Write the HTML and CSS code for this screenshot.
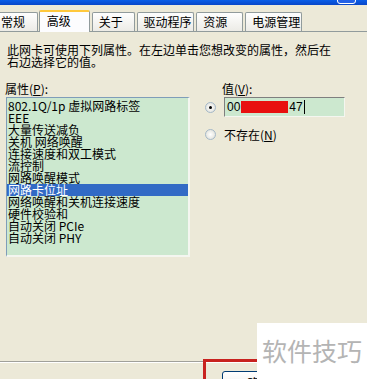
FILE: index.html
```html
<!DOCTYPE html>
<html lang="zh-CN">
<head>
    <meta charset="UTF-8">
    <title>网卡属性 - 高级</title>
    <link rel="stylesheet" href="styles.css">
</head>
<body>
    <div class="window">
        <div class="titlebar"><span class="tb-btn"></span></div>

        <div class="tabs">
            <div class="tab first">常规</div>
            <div class="tab active">高级</div>
            <div class="tab w-about">关于</div>
            <div class="tab w-driver">驱动程序</div>
            <div class="tab w-res">资源</div>
            <div class="tab w-power">电源管理</div>
        </div>

        <div class="page">
            <p class="desc">此网卡可使用下列属性。在左边单击您想改变的属性，然后在<br>右边选择它的值。</p>

            <div class="props">
                <div class="col-left">
                    <div class="label">属性(<u>P</u>):</div>
                    <ul class="listbox">
                        <li>802.1Q/1p 虚拟网路标签</li>
                        <li>EEE</li>
                        <li>大量传送减负</li>
                        <li>关机 网络唤醒</li>
                        <li>连接速度和双工模式</li>
                        <li>流控制</li>
                        <li>网路唤醒模式</li>
                        <li class="selected">网路卡位址</li>
                        <li>网络唤醒和关机连接速度</li>
                        <li>硬件校验和</li>
                        <li>自动关闭 PCIe</li>
                        <li>自动关闭 PHY</li>
                    </ul>
                </div>

                <div class="col-right">
                    <div class="label value-label">值(<u>V</u>):</div>
                    <div class="radio-row">
                        <span class="radio checked"></span>
                        <div class="textbox">00<span class="redact"></span>47<span class="caret"></span></div>
                    </div>
                    <div class="radio-row second">
                        <span class="radio"></span>
                        <span class="radio-text">不存在(<u>N</u>)</span>
                    </div>
                </div>
            </div>

            <div class="footer">
                <button class="btn">确定</button>
            </div>
        </div>

        <div class="mark-box"></div>
        <div class="watermark">软件技巧</div>
    </div>
</body>
</html>
```

FILE: styles.css
```css
* {
    box-sizing: border-box;
    margin: 0;
    padding: 0;
}

body {
    background: #ece9d8;
    font-family: "Noto Sans CJK SC", "DejaVu Sans", sans-serif;
    font-size: 12px;
    color: #000;
}

.window {
    position: relative;
    width: 367px;
    height: 379px;
    overflow: hidden;
    display: flex;
    flex-direction: column;
}

/* title bar strip */
.titlebar {
    height: 5px;
    background: linear-gradient(#0a5ee8, #0846c8);
    position: relative;
}

.tb-btn {
    position: absolute;
    left: 337px;
    top: -6px;
    width: 19px;
    height: 10px;
    border: 1px solid #fff;
    border-radius: 3px;
    background: #2462e6;
}

/* tabs */
.tabs {
    display: flex;
    align-items: flex-end;
    height: 27px;
    border-bottom: 1px solid #919b9c;
    padding-right: 65px;
}

.tab {
    height: 19px;
    line-height: 17px;
    border: 1px solid #919b9c;
    border-bottom: none;
    border-radius: 2px 2px 0 0;
    background: linear-gradient(#fefefe, #ecebe6);
    margin-right: 2px;
    padding-left: 6px;
    font-size: 12px;
}

.tab.first {
    margin-left: -10px;
    width: 48px;
    padding-left: 10px;
}

.tab.active {
    height: 22px;
    line-height: 18px;
    width: 51px;
    margin-left: -1px;
    margin-bottom: -1px;
    padding-left: 7px;
    background: #fcfcfe;
    border-top: 2px solid #ffc83c;
}

.w-about { width: 43px; }
.w-driver { width: 58px; }
.w-res { width: 47px; }
.w-power { width: 57px; margin-right: 0; }

/* page body */
.page {
    flex: 1;
    display: flex;
    flex-direction: column;
    padding-left: 6px;
}

.desc {
    margin-top: 12px;
    line-height: 12px;
    padding-left: 1px;
}

.props {
    display: flex;
    margin-top: 14px;
}

.label {
    height: 14px;
    line-height: 14px;
    margin-left: -1px;
}

.col-left {
    width: 184px;
}

.listbox {
    list-style: none;
    margin-top: 1px;
    height: 160px;
    background: #cce8cf;
    border-top: 1px solid #7f9db9;
    border-left: 1px solid #7f9db9;
    border-right: 2px solid #f4f6f0;
    border-bottom: 2px solid #f4f6f0;
    padding-top: 2px;
}

.listbox li {
    height: 12px;
    line-height: 12px;
    padding-left: 1px;
    white-space: nowrap;
}

.listbox li.selected {
    background: #316ac5;
    color: #fff;
}

.col-right {
    margin-left: 15px;
    width: 140px;
}

.value-label {
    margin-left: 17px;
}

.radio-row {
    display: flex;
    align-items: center;
    margin-top: 1px;
}

.radio-row.second {
    margin-top: 9px;
}

.radio {
    width: 11px;
    height: 11px;
    border-radius: 50%;
    border: 1px solid #a4b8c8;
    background: radial-gradient(#ffffff, #dcdcd4);
    position: relative;
    flex: none;
}

.radio.checked::after {
    content: "";
    position: absolute;
    left: 3px;
    top: 3px;
    width: 3px;
    height: 3px;
    border-radius: 50%;
    background: #000;
}

.textbox {
    margin-left: 8px;
    width: 121px;
    height: 20px;
    line-height: 17px;
    background: #cce8cf;
    border-top: 1px solid #7f7f7f;
    border-left: 1px solid #7f7f7f;
    border-right: 1px solid #f4f6f0;
    border-bottom: 1px solid #f4f6f0;
    padding-left: 2px;
    display: flex;
    align-items: center;
    font-family: "Liberation Sans", sans-serif;
}

.redact {
    display: inline-block;
    width: 47px;
    height: 12px;
    background: #e80f0f;
    margin: 0 1px;
}

.caret {
    display: inline-block;
    width: 1px;
    height: 14px;
    background: #000;
    margin-left: 1px;
}

.radio-text {
    margin-left: 8px;
}

.footer {
    margin-top: auto;
    margin-left: -6px;
    height: 18px;
    border-top: 1px solid #a0a09a;
    box-shadow: inset 0 1px 0 #fff;
    padding-left: 222px;
    padding-top: 9px;
}

.btn {
    width: 75px;
    height: 22px;
    border: 1px solid #003c74;
    border-radius: 3px;
    background: linear-gradient(#fff, #ecebe6);
    font-family: "Noto Sans CJK SC", sans-serif;
    font-size: 12px;
}

/* red highlight and watermark overlays */
.mark-box {
    position: absolute;
    left: 203px;
    top: 359px;
    width: 200px;
    height: 40px;
    border: 3px solid #c8221f;
}

.watermark {
    position: absolute;
    left: 257px;
    top: 323px;
    right: 0;
    bottom: 0;
    background: #fff;
    color: #b4b4b4;
    font-size: 25px;
    line-height: 54px;
    padding-left: 5px;
    letter-spacing: 0;
}
```
